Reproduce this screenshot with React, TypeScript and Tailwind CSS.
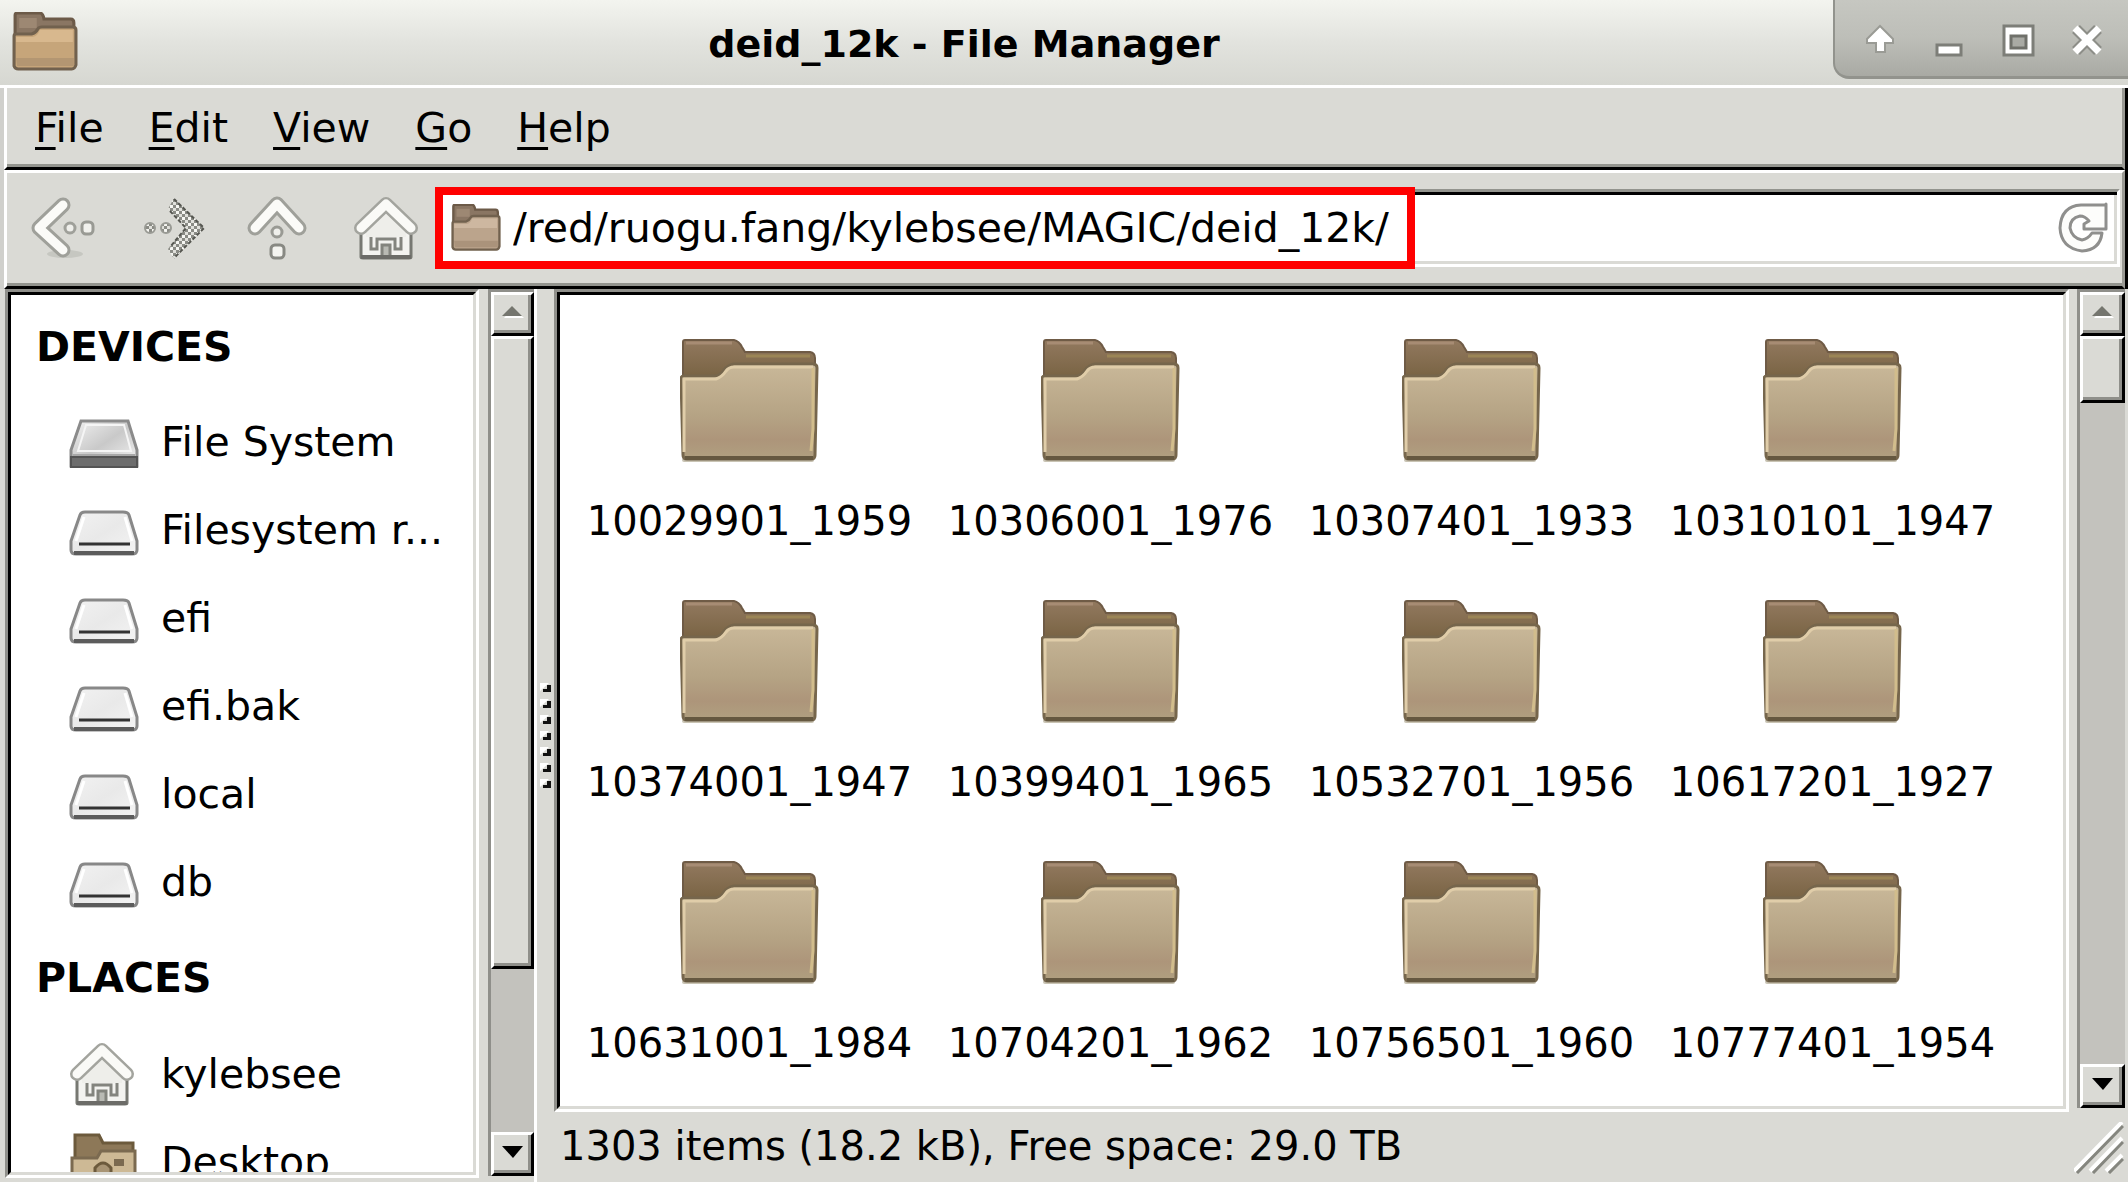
import React from "react";

const devices = ["Filesystem r...", "efi", "efi.bak", "local", "db"];

const folders = [
  "10029901_1959",
  "10306001_1976",
  "10307401_1933",
  "10310101_1947",
  "10374001_1947",
  "10399401_1965",
  "10532701_1956",
  "10617201_1927",
  "10631001_1984",
  "10704201_1962",
  "10756501_1960",
  "10777401_1954",
];

const menus = [
  ["F", "ile"],
  ["E", "dit"],
  ["V", "iew"],
  ["G", "o"],
  ["H", "elp"],
];

function LargeFolder() {
  return (
    <svg viewBox="0 0 140 124" className="h-[124px] w-[140px]" aria-hidden="true">
      <defs>
        <linearGradient id="front" x1="0" y1="0" x2="0" y2="1">
          <stop offset="0" stopColor="#c9b899" />
          <stop offset="0.55" stopColor="#b5a384" />
          <stop offset="0.8" stopColor="#ad957a" />
          <stop offset="1" stopColor="#b0a080" />
        </linearGradient>
        <linearGradient id="back" x1="0" y1="0" x2="0" y2="1">
          <stop offset="0" stopColor="#92795f" />
          <stop offset="1" stopColor="#75603f" />
        </linearGradient>
      </defs>
      <rect x="2" y="119" width="132" height="4" rx="2" fill="#c9c4b4" />
      <path d="M3 44V3Q3 1 5 1H54Q59 2 62 8L65 13H130Q135 14 135 19V44Z" fill="url(#back)" stroke="#6f5b46" strokeWidth="2" />
      <path d="M6 4H52" stroke="#a78c74" strokeWidth="3" />
      <path d="M66 17H130" stroke="#9b8556" strokeWidth="3" />
      <path d="M1 40Q1 37 4 37H34Q40 37 44 31Q48 26 54 25H133Q137 25 137 29L135 116Q135 120 131 120H7Q3 120 3 116Z" fill="url(#front)" stroke="#76664c" strokeWidth="3" />
      <path d="M4 113V40H36Q42 38 46 32Q49 28 54 28H133" fill="none" stroke="#e0cda9" strokeWidth="3" />
      <path d="M133 29V90L131 112" fill="none" stroke="#d2bd8c" strokeWidth="3" />
      <path d="M5 119H133" stroke="#655840" strokeWidth="4" />
    </svg>
  );
}

function SmallFolder({ warm = false, className }: { warm?: boolean; className: string }) {
  return (
    <svg viewBox="0 0 64 60" preserveAspectRatio="none" className={className} aria-hidden="true">
      <path d="M3 26V3Q3 1 5 1H27Q30 1 31 7H57Q60 7 60 11V26Z" fill="#8a7663" stroke="#6c5a48" strokeWidth="3" />
      <path d="M7 6H24V16H7Z" fill="#9d8873" />
      <path d="M2 24Q2 22 4 22H19Q23 21 25 17Q26 15 29 15H59Q62 15 62 18V53Q61 57 58 57H6Q3 57 2 54Z" fill={warm ? "#c6a57a" : "#bba48c"} stroke="#71614e" strokeWidth="3" />
      <path d="M4 25H20Q25 24 27 18H59V30H4Z" fill={warm ? "#d8b88e" : "#cdb7a0"} />
      <path d="M4 46H60V54H5Z" fill={warm ? "#b39672" : "#aa937b"} />
    </svg>
  );
}

function DriveIcon({ solid = false }: { solid?: boolean }) {
  return (
    <svg viewBox="0 0 72 52" className="h-[52px] w-[72px] shrink-0" aria-hidden="true">
      <defs>
        <linearGradient id={solid ? "lidSolid" : "lid"} x1="0" y1="0" x2="1" y2="1">
          <stop offset="0" stopColor="#f2f2f2" />
          <stop offset="0.5" stopColor={solid ? "#c9c9c9" : "#e9e9e9"} />
          <stop offset="1" stopColor="#f4f4f4" />
        </linearGradient>
      </defs>
      {solid ? (
        <>
          <path d="M12 5H59L68 34V50H2V34Z" fill="url(#lidSolid)" stroke="#8b8b8b" strokeWidth="3" />
          <path d="M17 9H55L62 35H9Z" fill="none" stroke="#f5f5f5" strokeWidth="2" />
          <path d="M2 41H68V51H2Z" fill="#6d6d6d" stroke="#545454" strokeWidth="2" />
          <path d="M4 39H66" stroke="#a8a8a8" strokeWidth="2" />
        </>
      ) : (
        <>
          <path d="M11 11Q12 8 16 8H54Q59 8 60 11L68 37V46Q68 50 63 50H7Q2 50 2 46V37Z" fill="url(#lid)" stroke="#888" strokeWidth="3" />
          <path d="M15 13L7 37M56 13L63 37" stroke="#fff" strokeWidth="3" />
          <path d="M10 40H61" stroke="#333" strokeWidth="3" />
          <path d="M5 49H65" stroke="#5c5c5c" strokeWidth="4" />
        </>
      )}
    </svg>
  );
}

function HomeIcon({ className }: { className: string }) {
  return (
    <svg viewBox="0 0 66 66" className={className} aria-hidden="true">
      <path d="M8 36H58V62Q58 63 56 63H10Q8 63 8 62Z" fill="#f3f3f0" stroke="#777872" strokeWidth="3" />
      <path d="M13 36L33 17L53 36V42H13Z" fill="#eeeeea" />
      <path d="M18 42V54H24V44H42V54H48V42" fill="none" stroke="#83847e" strokeWidth="3" />
      <path d="M29 62V50H37V62" fill="#b9bab4" stroke="#83847e" strokeWidth="3" />
      <path d="M8 33L33 9L58 33" fill="none" stroke="#a3a49e" strokeWidth="14" strokeLinecap="round" strokeLinejoin="round" />
      <path d="M8 33L33 9L58 33" fill="none" stroke="#fafaf7" strokeWidth="9" strokeLinecap="round" strokeLinejoin="round" />
      <path d="M8 62H58" stroke="#6c6c68" strokeWidth="4" />
    </svg>
  );
}

function BackIcon() {
  return (
    <svg viewBox="0 0 72 66" className="h-[66px] w-[72px]" aria-hidden="true">
      <ellipse cx="38" cy="59" rx="18" ry="4" fill="#c6c7c1" />
      <path d="M36 10L12 33L36 55" fill="none" stroke="#9fa09a" strokeWidth="15" strokeLinecap="round" strokeLinejoin="round" />
      <path d="M36 10L12 33L36 55" fill="none" stroke="#fbfbf8" strokeWidth="9" strokeLinecap="round" strokeLinejoin="round" />
      <circle cx="43" cy="33" r="5" fill="#efefeb" stroke="#9fa09a" strokeWidth="3" />
      <rect x="55" y="27" width="11" height="12" rx="4" fill="#f1f1ed" stroke="#999a94" strokeWidth="3" />
    </svg>
  );
}

function ForwardIcon() {
  return (
    <svg viewBox="0 0 76 70" className="h-[70px] w-[76px]" aria-hidden="true">
      <defs>
        <pattern id="stipple" width="6" height="6" patternUnits="userSpaceOnUse">
          <rect width="6" height="6" fill="#e0e0db" />
          <rect width="3" height="3" fill="#8a8b85" />
          <rect x="3" y="3" width="3" height="3" fill="#8a8b85" />
          <rect x="3" width="3" height="3" fill="#f6f6f2" />
        </pattern>
      </defs>
      <path d="M25 16L31 5L61 35L31 66L25 56L43 35Z" fill="url(#stipple)" />
      <path d="M31 6L61 35L31 65M27 18L43 35L27 54" fill="none" stroke="#555650" strokeWidth="2" strokeDasharray="4 2" />
      <circle cx="23" cy="35" r="5" fill="url(#stipple)" stroke="#999a94" strokeWidth="2" />
      <circle cx="7" cy="35" r="5" fill="url(#stipple)" stroke="#999a94" strokeWidth="2" />
    </svg>
  );
}

function UpIcon() {
  return (
    <svg viewBox="0 0 62 68" className="h-[68px] w-[62px]" aria-hidden="true">
      <path d="M8 34L30 10L52 34" fill="none" stroke="#9fa09a" strokeWidth="15" strokeLinecap="round" strokeLinejoin="round" />
      <path d="M8 34L30 10L52 34" fill="none" stroke="#fbfbf8" strokeWidth="9" strokeLinecap="round" strokeLinejoin="round" />
      <circle cx="30" cy="38" r="5" fill="#efefeb" stroke="#999a94" strokeWidth="3" />
      <rect x="24" y="51" width="13" height="13" rx="4" fill="#f4f4f0" stroke="#888983" strokeWidth="3" />
    </svg>
  );
}

function ScrollButton({ up = false, label }: { up?: boolean; label: string }) {
  return (
    <button
      type="button"
      aria-label={label}
      className="flex h-11 w-full shrink-0 items-center justify-center border-3 border-t-white border-r-black border-b-black border-l-white bg-[#dadad5] pb-1 shadow-[inset_-3px_-3px_0_#8f8f8a]"
    >
      <svg viewBox="0 0 22 12" className="h-3 w-[22px]" aria-hidden="true">
        {up ? (
          <>
            <path d="M11 2L22 12H2Z" fill="#fff" />
            <path d="M10 0L20 10H0Z" fill="#75766f" />
          </>
        ) : (
          <path d="M0 0H21L11 12Z" fill="#000" />
        )}
      </svg>
    </button>
  );
}

function ScrollBar({ name, thumb }: { name: string; thumb: string }) {
  return (
    <div className="flex w-full min-h-0 flex-1 flex-col border-t-3 border-l-3 border-[#8f8f8a] bg-[#c3c2bd]">
      <ScrollButton up label={`Scroll ${name} up`} />
      <div className="min-h-0 flex-1">
        <div className={thumb} />
      </div>
      <ScrollButton label={`Scroll ${name} down`} />
    </div>
  );
}

const thumbBase =
  "w-full border-3 border-t-white border-r-black border-b-black border-l-white bg-[#dadad5] shadow-[inset_-3px_-3px_0_#8f8f8a]";

function SidebarItem({ icon, label }: { icon: React.ReactNode; label: string }) {
  return (
    <li>
      <a href="#" className="flex h-[88px] items-center gap-5 pl-[58px] whitespace-nowrap">
        {icon}
        {label}
      </a>
    </li>
  );
}

export default function App() {
  return (
    <div className="flex h-screen flex-col overflow-hidden bg-[#dadad5] font-['DejaVu_Sans',sans-serif] text-[40px] leading-[48px] text-black">
      <header className="flex h-[88px] shrink-0 items-stretch border-b-3 border-white bg-linear-to-b from-[#f3f4ef] via-[#e2e3de] to-[#d6d7d1]">
        <div className="flex w-[95px] items-start pt-3 pl-3">
          <SmallFolder warm className="h-[60px] w-[66px]" />
        </div>
        <h1 className="flex-1 pt-5 text-center text-[38px] font-bold">deid_12k - File Manager</h1>
        <div className="flex h-[79px] w-[295px] items-start rounded-bl-2xl border-b-3 border-l-2 border-[#92938d] bg-linear-to-b from-[#c6c7c1] via-[#bdbeb8] to-[#a9aaa4] pr-[7px] pl-2.5">
          <button type="button" aria-label="Shade" className="flex h-20 flex-1 items-center justify-center">
            <svg viewBox="0 0 36 36" className="size-9" aria-hidden="true">
              <path d="M18 4L31 17V21H23V30H14V21H5V17Z" fill="#fff" stroke="#9a9b95" strokeWidth="2" />
            </svg>
          </button>
          <button type="button" aria-label="Minimize" className="flex h-20 flex-1 items-center justify-center">
            <svg viewBox="0 0 36 36" className="size-9" aria-hidden="true">
              <rect x="6" y="23" width="24" height="10" fill="#fff" stroke="#7d7e78" strokeWidth="3" />
            </svg>
          </button>
          <button type="button" aria-label="Maximize" className="flex h-20 flex-1 items-center justify-center">
            <svg viewBox="0 0 36 36" className="size-9" aria-hidden="true">
              <rect x="4" y="4" width="29" height="29" fill="#fff" stroke="#7d7e78" strokeWidth="3" />
              <rect x="11" y="14" width="15" height="12" fill="#a9aaa4" stroke="#6f706a" strokeWidth="3" />
            </svg>
          </button>
          <button type="button" aria-label="Close" className="flex h-20 flex-1 items-center justify-center">
            <svg viewBox="0 0 36 36" className="size-9" aria-hidden="true">
              <path d="M7 7L29 29M29 7L7 29" stroke="#8d8e88" strokeWidth="11" />
              <path d="M6 6L30 30M30 6L6 30" stroke="#fff" strokeWidth="7" />
            </svg>
          </button>
        </div>
      </header>

      <div className="flex shrink-0 flex-col border-r-3 border-l-4 border-r-black border-l-[#d0d0cc]">
        <nav className="flex h-[82px] items-start gap-[45px] border-r-3 border-b-3 border-l-3 border-r-[#9a9a94] border-b-black border-l-white pt-4 pl-7 text-[41px] shadow-[inset_0_-3px_0_#93948e]">
          {menus.map(([key, rest]) => (
            <button type="button" key={key}>
              <span className="underline decoration-3 underline-offset-[5px]">{key}</span>
              {rest}
            </button>
          ))}
        </nav>
        <div className="flex h-[119px] items-start border-t-3 border-r-3 border-b-3 border-l-3 border-t-white border-r-[#9a9a94] border-b-black border-l-white pt-4 shadow-[inset_0_-3px_0_#93948e]">
          <div className="flex h-[78px] w-[428px] shrink-0 items-center pl-5">
            <button type="button" aria-label="Back">
              <BackIcon />
            </button>
            <button type="button" aria-label="Forward" className="ml-11">
              <ForwardIcon />
            </button>
            <button type="button" aria-label="Up" className="ml-7">
              <UpIcon />
            </button>
            <button type="button" aria-label="Home" className="ml-11">
              <HomeIcon className="size-[66px]" />
            </button>
          </div>
          <div className="relative mr-0.5 flex h-[78px] flex-1 items-center border-t-3 border-r-3 border-b-3 border-t-[#93948e] border-r-white border-b-white bg-white pl-4 shadow-[inset_0_3px_0_#000,inset_-3px_-3px_0_#dadad5]">
            <SmallFolder className="h-12 w-[50px] shrink-0" />
            <input
              type="text"
              aria-label="Location"
              defaultValue="/red/ruogu.fang/kylebsee/MAGIC/deid_12k/"
              className="ml-3 min-w-0 flex-1 bg-transparent text-[41px] outline-none"
            />
            <button type="button" aria-label="Reload" className="mr-2 shrink-0">
              <svg viewBox="0 0 52 52" className="size-[52px]" aria-hidden="true">
                <path
                  d="M49 2V27H27V22L32 19Q28 14 23 14Q13 16 13 26Q15 36 25 38Q31 37 35 31H45Q43 48 25 49Q4 46 3 26Q4 4 24 3H49Z"
                  fill="#fdfdfb"
                  stroke="#8f8f8d"
                  strokeWidth="3"
                  strokeLinejoin="round"
                />
              </svg>
            </button>
            <div className="pointer-events-none absolute -top-[5px] left-0 h-[82px] w-[980px] border-8 border-[#ff0000]" />
          </div>
        </div>
      </div>

      <div className="flex min-h-0 flex-1 pl-[5px]">
        <aside className="mb-1 flex w-[474px] shrink-0 border-3 border-t-[#8f8f8a] border-r-white border-b-white border-l-[#8f8f8a] text-[41px]">
          <div className="min-w-0 flex-1 overflow-hidden border-3 border-t-black border-r-[#dadad5] border-b-[#dadad5] border-l-black bg-white">
            <h2 className="flex h-[103px] items-center pl-[25px] font-bold">DEVICES</h2>
            <ul>
              <SidebarItem icon={<DriveIcon solid />} label="File System" />
              {devices.map((d) => (
                <SidebarItem key={d} icon={<DriveIcon />} label={d} />
              ))}
            </ul>
            <h2 className="flex h-[104px] items-center pl-[25px] font-bold">PLACES</h2>
            <ul>
              <SidebarItem
                icon={
                  <span className="w-[72px] shrink-0">
                    <HomeIcon className="size-[66px]" />
                  </span>
                }
                label="kylebsee"
              />
              <SidebarItem
                icon={
                  <svg viewBox="0 0 72 64" className="h-16 w-[72px] shrink-0" aria-hidden="true">
                    <path d="M6 30V5H30L34 13H64V30Z" fill="#8d7858" stroke="#6c5a3c" strokeWidth="3" />
                    <path d="M3 28H28L32 21H66V61H3Z" fill="#cdb995" stroke="#7b6a50" strokeWidth="3" />
                    <path d="M26 60V38Q34 28 42 38V60" fill="#a89474" stroke="#6c5a3c" strokeWidth="3" />
                    <rect x="45" y="29" width="10" height="7" fill="#7b6a50" />
                  </svg>
                }
                label="Desktop"
              />
            </ul>
          </div>
        </aside>
        <div className="mb-1.5 ml-[9px] flex w-[46px] shrink-0">
          <ScrollBar name="side pane" thumb={`${thumbBase} h-[79.5%]`} />
        </div>
        <div className="flex w-[20px] shrink-0 cursor-col-resize flex-col items-center justify-center gap-[6px] border-l-3 border-white">
          {[0, 1, 2, 3, 4, 5, 6].map((i) => (
            <svg key={i} viewBox="0 0 12 10" className="h-2.5 w-3" aria-hidden="true">
              <path d="M0 8V0H9Z" fill="#fff" />
              <path d="M7 2H11V9H3V6H7Z" fill="#111" />
            </svg>
          ))}
        </div>
        <div className="flex min-w-0 flex-1 flex-col">
          <div className="flex min-h-0 flex-1">
            <main className="flex min-w-0 flex-1 border-3 border-t-[#8f8f8a] border-r-white border-b-white border-l-[#8f8f8a]">
              <ul className="grid min-w-0 flex-1 auto-rows-[261px] grid-cols-[repeat(auto-fill,361px)] content-start overflow-hidden border-3 border-t-black border-r-[#dadad5] border-b-[#dadad5] border-l-black bg-white pt-11 pl-[9px]">
                {folders.map((f) => (
                  <li key={f}>
                    <a href="#" className="flex flex-col items-center gap-[34px]">
                      <LargeFolder />
                      {f}
                    </a>
                  </li>
                ))}
              </ul>
            </main>
            <div className="mr-[3px] mb-1 ml-2 flex w-12 shrink-0">
              <ScrollBar name="folder view" thumb={`${thumbBase} h-[67px]`} />
            </div>
          </div>
          <footer className="flex h-[70px] shrink-0 items-start justify-between pt-2.5 pr-1 pl-1.5">
            <p>1303 items (18.2 kB), Free space: 29.0 TB</p>
            <svg viewBox="0 0 50 52" className="h-[52px] w-[50px]" aria-hidden="true">
              <path d="M0 49L48 0M16 49L48 16M32 49L48 33" stroke="#fff" strokeWidth="4" />
              <path d="M3 51L49 4M19 51L49 20M35 51L49 37" stroke="#85867f" strokeWidth="3" />
            </svg>
          </footer>
        </div>
      </div>
    </div>
  );
}
